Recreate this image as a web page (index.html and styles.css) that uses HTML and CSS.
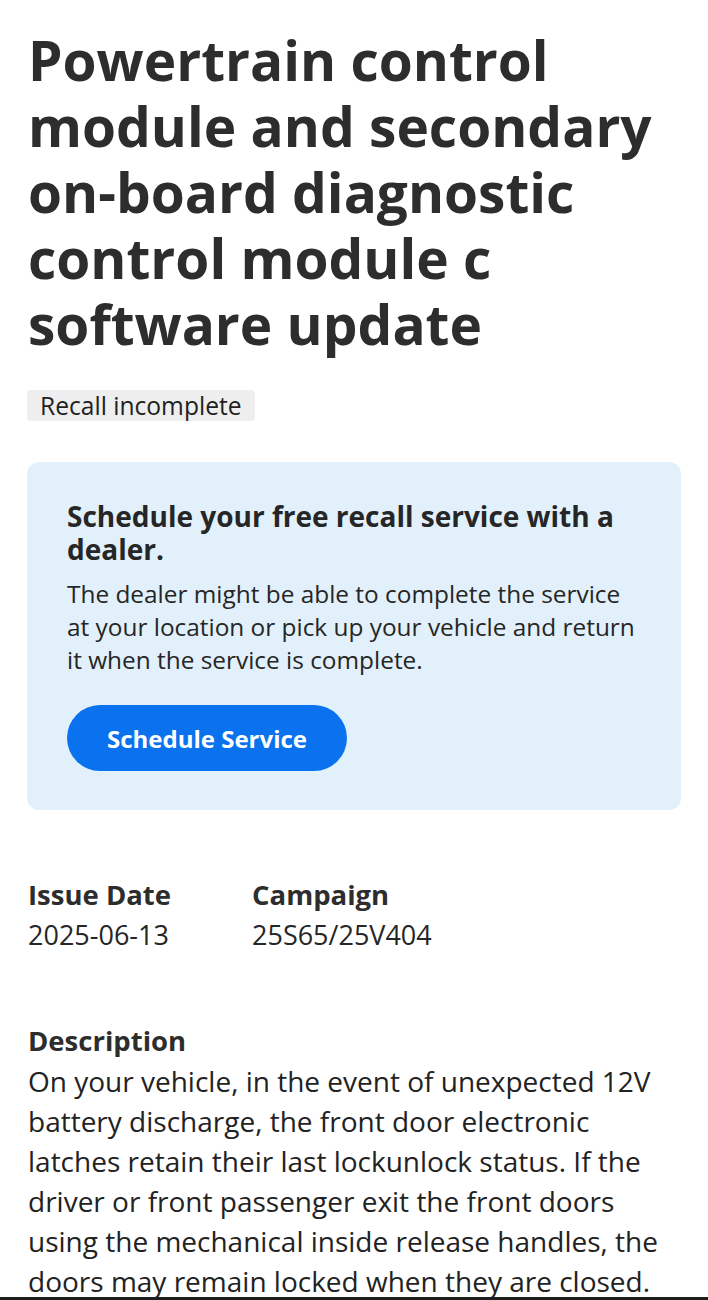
FILE: index.html
```html
<!DOCTYPE html>
<html lang="en">
<head>
<meta charset="utf-8">
<title>Recall</title>
<link rel="stylesheet" href="styles.css">
</head>
<body>
<div class="page">
  <h1 class="title">Powertrain control module and secondary on-board diagnostic control module c software update</h1>
  <span class="badge">Recall incomplete</span>
  <section class="card">
    <h2 class="card-heading">Schedule your free recall service with a dealer.</h2>
    <p class="card-text">The dealer might be able to complete the service at your location or pick up your vehicle and return it when the service is complete.</p>
    <a class="btn" href="#">Schedule Service</a>
  </section>
  <div class="meta">
    <div class="meta-item">
      <div class="label">Issue Date</div>
      <div class="value">2025-06-13</div>
    </div>
    <div class="meta-item">
      <div class="label">Campaign</div>
      <div class="value">25S65/25V404</div>
    </div>
  </div>
  <section class="desc">
    <div class="label">Description</div>
    <p class="desc-text">On your vehicle, in the event of unexpected 12V battery discharge, the front door electronic latches retain their last lockunlock status. If the driver or front passenger exit the front doors using the mechanical inside release handles, the doors may remain locked when they are closed.</p>
  </section>
</div>
</body>
</html>
```
FILE: styles.css
```css
* { box-sizing: border-box; }
html, body { margin: 0; padding: 0; background: #ffffff; }
body {
  font-family: "Open Sans", "Noto Sans", sans-serif;
  color: #222222;
}
.page {
  height: 1300px;
  overflow: hidden;
  padding: 27px 27px 0 28px;
  border-bottom: 3px solid #1e1e1e;
}
.title {
  margin: 0;
  font-size: 55px;
  line-height: 66px;
  font-weight: 700;
  color: #2d2d2d;
  letter-spacing: 0;
}
.badge {
  display: inline-block;
  margin-top: 33px;
  margin-left: -1px;
  padding: 0 13px 0 13px;
  height: 31px;
  line-height: 31px;
  font-size: 24.6px;
  background: #eeeeee;
  border-radius: 4px;
  color: #1f1f1f;
}
.card {
  margin: 41px 0 0 -1px;
  background: #e1f0fb;
  border-radius: 12px;
  padding: 38px 40px 39px 40px;
}
.card-heading {
  margin: 0;
  font-size: 28px;
  line-height: 33px;
  font-weight: 700;
  color: #262626;
}
.card-text {
  margin: 11px 0 0 0;
  font-size: 24.4px;
  line-height: 33px;
  color: #262626;
}
.btn {
  display: inline-flex;
  align-items: center;
  justify-content: center;
  margin-top: 29px;
  width: 280px;
  height: 66px;
  border-radius: 33px;
  background: #0a72ef;
  color: #ffffff;
  font-size: 24px;
  font-weight: 700;
  text-decoration: none;
}
.meta {
  display: grid;
  grid-template-columns: 224px auto;
  margin-top: 65px;
}
.label {
  font-size: 27.5px;
  line-height: 40px;
  font-weight: 700;
  color: #2d2d2d;
}
.value {
  font-size: 27px;
  line-height: 40px;
  color: #262626;
}
.desc {
  margin-top: 66px;
}
.desc-text {
  margin: 0;
  font-size: 28px;
  line-height: 40px;
  color: #222222;
}
```
